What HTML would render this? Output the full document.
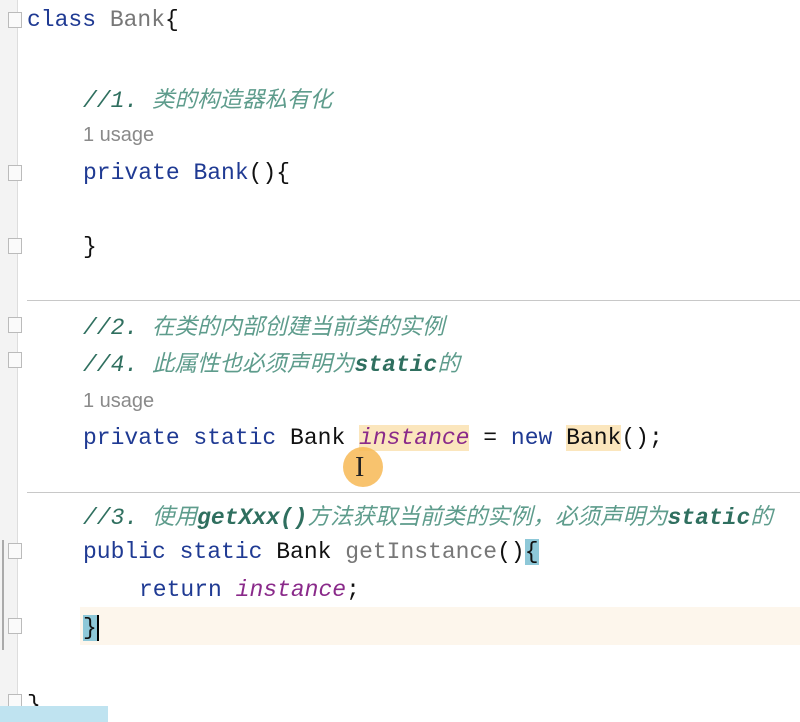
<!DOCTYPE html><html><head><meta charset="utf-8"><style>
body{margin:0;width:800px;height:722px;background:#fff;position:relative;overflow:hidden;font-family:"Liberation Mono","Noto Sans CJK SC",monospace;font-size:23px;}
.l{position:absolute;left:83px;white-space:pre;line-height:30px;height:30px;color:#111}
.k{color:#1f3a93}.c{color:#2f6f5f;font-style:italic}.cz{color:#5e9c8c;font-style:italic;font-family:"Noto Sans CJK SC",sans-serif;font-size:22.5px}
.b{font-weight:bold}.u{font-family:"Liberation Sans",sans-serif;font-size:20px;color:#8a8a8a}
.g{color:#777}.p{color:#8a2a8a;font-style:italic}.hl{background:#fbe6bd}.cy{background:#8ec8d8}
.sep{position:absolute;left:27px;right:0;height:1px;background:#c8c8c8}
.f{position:absolute;left:8px;width:14px;height:16px;border:1px solid #bbb;background:#fafafa;box-sizing:border-box}
</style></head><body>
<div style="position:absolute;left:0;top:0;width:17px;height:722px;background:#f3f3f3;border-right:1px solid #ddd"></div>
<div style="position:absolute;left:80px;top:607px;width:720px;height:38px;background:#fdf6ec"></div>
<div class="sep" style="top:300px"></div><div class="sep" style="top:492px"></div>
<div class="f" style="top:12px"></div><div class="f" style="top:165px"></div><div class="f" style="top:238px"></div><div class="f" style="top:317px"></div><div class="f" style="top:352px"></div><div class="f" style="top:543px"></div><div class="f" style="top:618px"></div><div class="f" style="top:694px"></div>
<div style="position:absolute;left:2px;top:540px;width:2px;height:110px;background:#aaa"></div>
<div class="l" style="left:27px;top:5px"><span class="k">class</span> <span class="g">Bank</span>{</div>
<div class="l" style="top:83px"><span class="c">//1. </span><span class="cz">类的构造器私有化</span></div>
<div class="l u" style="top:120px">1 usage</div>
<div class="l" style="top:158px"><span class="k">private</span> <span style="color:#1f3a93">Bank</span>(){</div>
<div class="l" style="top:232px">}</div>
<div class="l" style="top:310px"><span class="c">//2. </span><span class="cz">在类的内部创建当前类的实例</span></div>
<div class="l" style="top:347px"><span class="c">//4. </span><span class="cz">此属性也必须声明为</span><span class="c b">static</span><span class="cz">的</span></div>
<div class="l u" style="top:386px">1 usage</div>
<div class="l" style="top:423px"><span class="k">private static</span> Bank <span class="p hl">instance</span> = <span class="k">new</span> <span class="hl">Bank</span>();</div>
<div style="position:absolute;left:343px;top:447px;width:40px;height:40px;border-radius:50%;background:#f7b955;opacity:.85"></div>
<div style="position:absolute;left:355px;top:452px;font-family:'Liberation Serif';font-size:28px;color:#222">I</div>
<div class="l" style="top:500px"><span class="c">//3. </span><span class="cz">使用</span><span class="c b">getXxx()</span><span class="cz">方法获取当前类的实例，必须声明为</span><span class="c b">static</span><span class="cz">的</span></div>
<div class="l" style="top:537px"><span class="k">public static</span> Bank <span class="g">getInstance</span>()<span class="cy">{</span></div>
<div class="l" style="left:139px;top:575px"><span class="k">return</span> <span class="p">instance</span>;</div>
<div class="l" style="top:613px"><span class="cy">}</span><span style="border-left:2px solid #000"></span></div>
<div class="l" style="left:27px;top:690px">}</div>
<div style="position:absolute;left:0;top:706px;width:108px;height:16px;background:#bfe3f0"></div>
</body></html>
